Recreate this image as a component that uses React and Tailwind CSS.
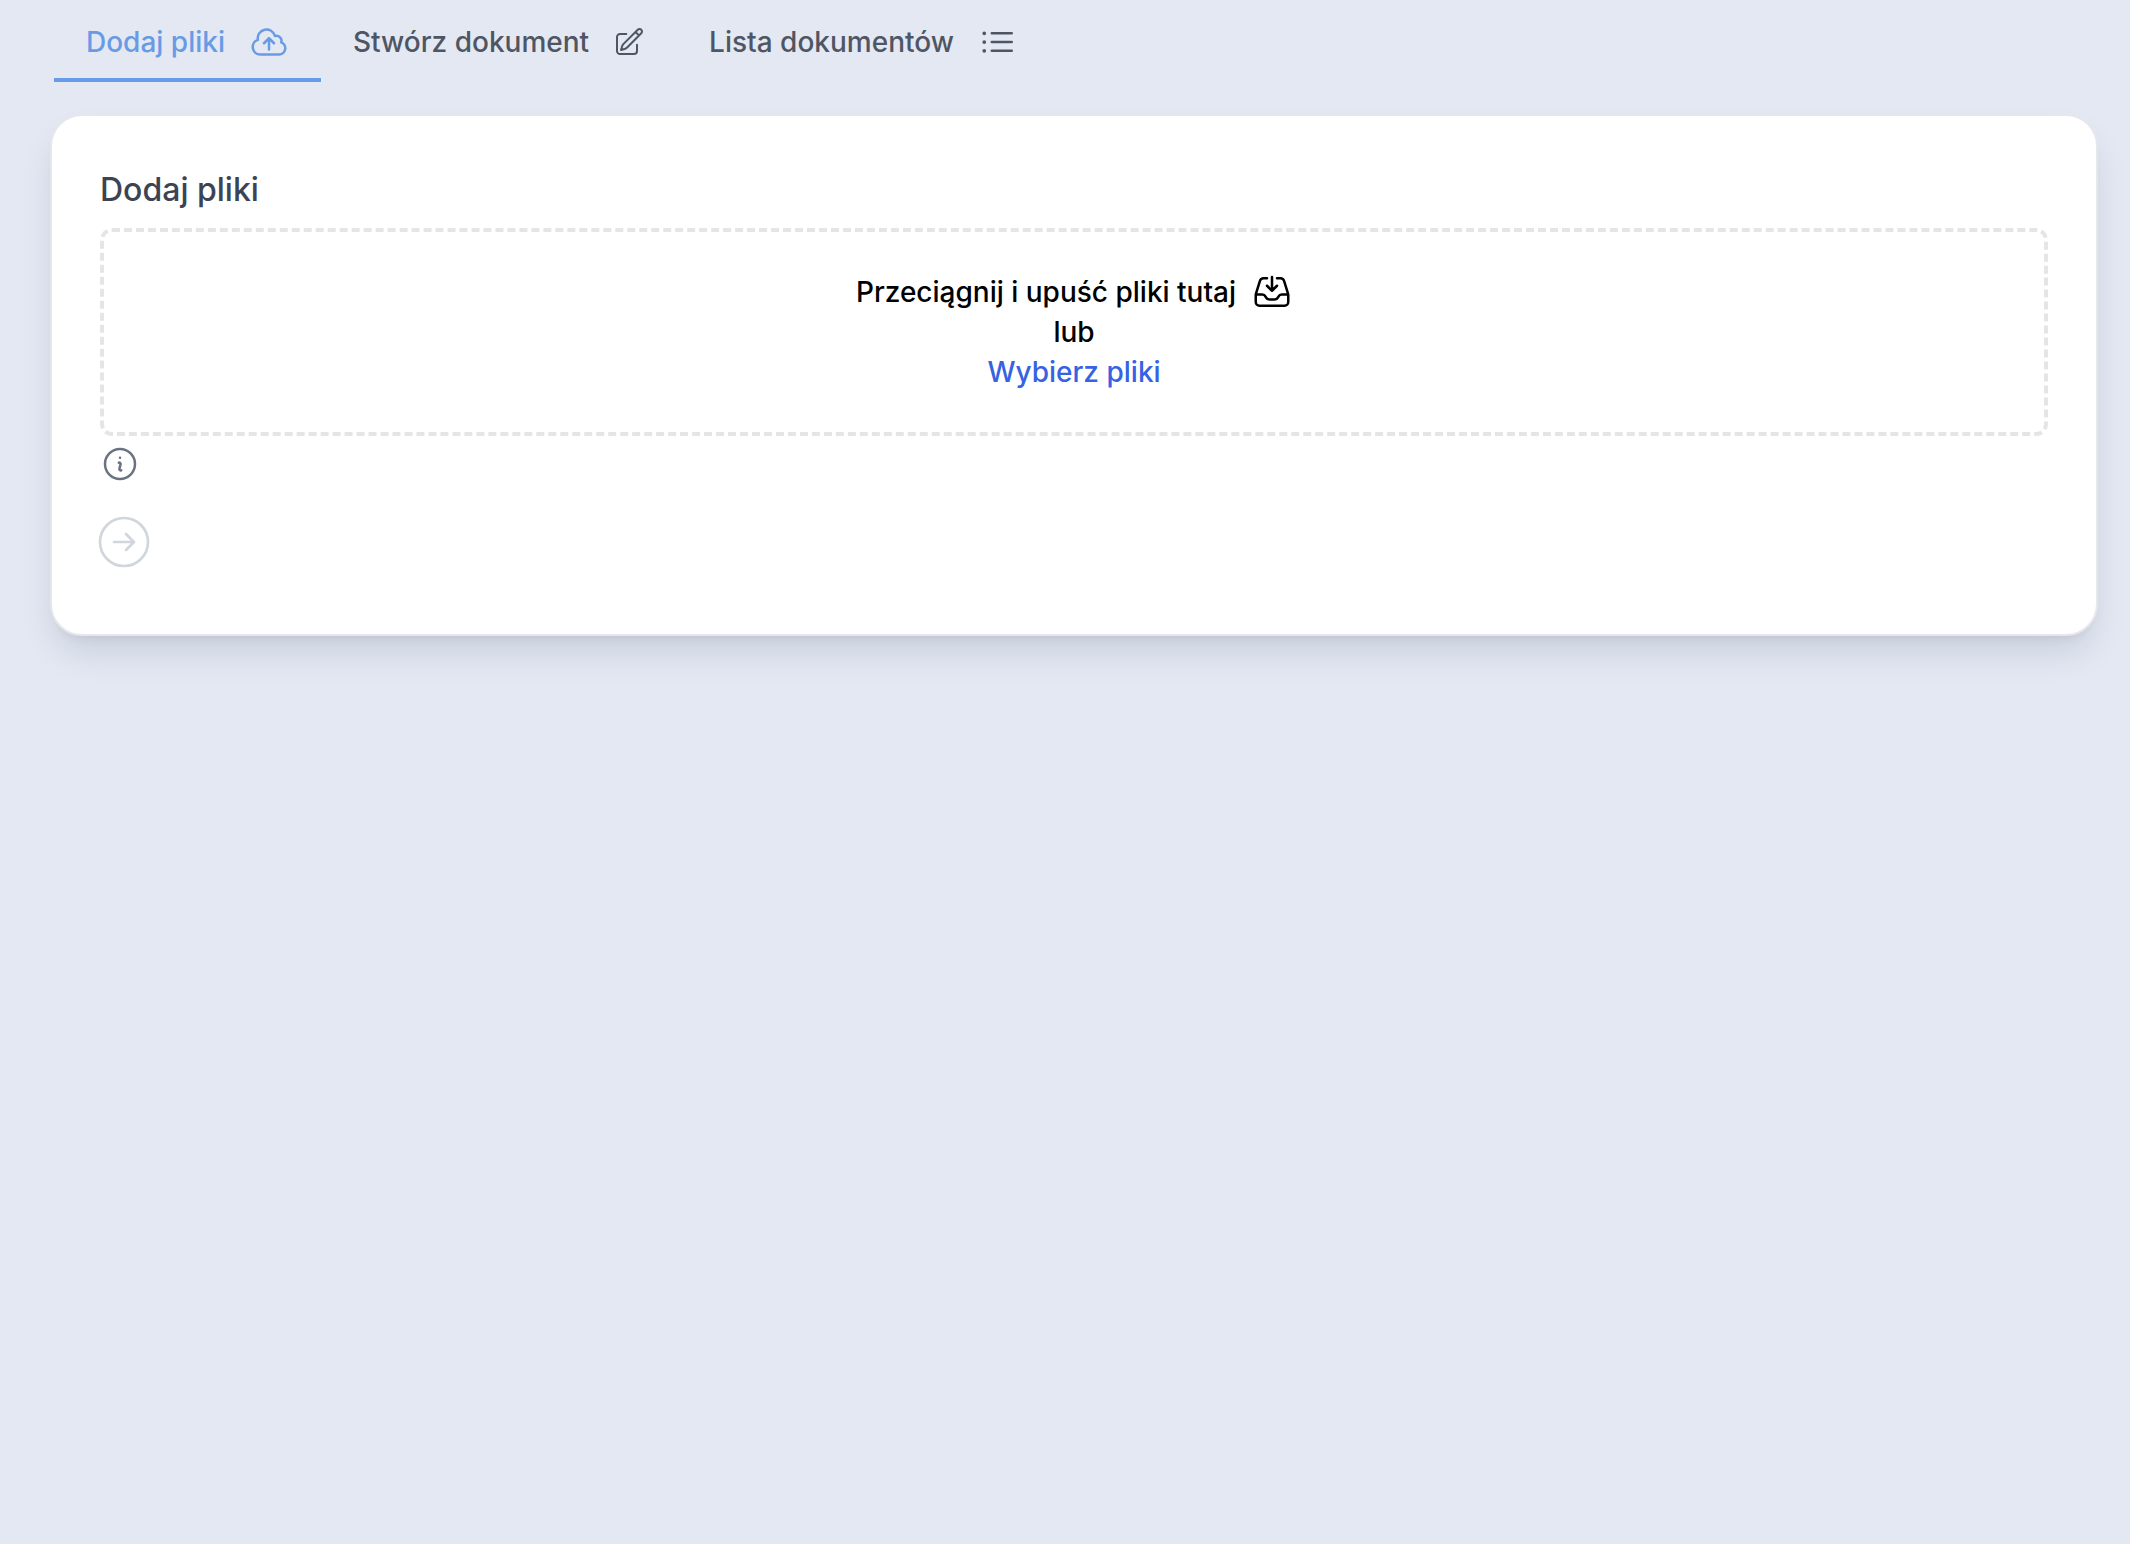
import { useState } from 'react';
import {
  HiOutlineArrowRightCircle,
  HiOutlineCloudArrowUp,
  HiOutlineInboxArrowDown,
  HiOutlineInformationCircle,
  HiOutlineListBullet,
  HiOutlinePencilSquare,
} from 'react-icons/hi2';

const tabs = [
  { id: 'upload', label: 'Dodaj pliki', icon: <HiOutlineCloudArrowUp className="size-10" /> },
  { id: 'create', label: 'Stwórz dokument', icon: <HiOutlinePencilSquare className="size-8" /> },
  { id: 'list', label: 'Lista dokumentów', icon: <HiOutlineListBullet className="size-10" /> },
];

function Tabs({ active, onChange }) {
  return (
    <nav className="flex px-1">
      {tabs.map((tab) => (
        <button
          key={tab.id}
          type="button"
          onClick={() => onChange(tab.id)}
          className={`flex items-center gap-6 border-b-4 px-8 pt-[22px] pb-4 text-[28px] leading-10 font-medium ${
            active === tab.id
              ? 'border-[#689be4] text-[#689be4]'
              : 'border-transparent text-[#4f5663]'
          }`}
        >
          {tab.label}
          {tab.icon}
        </button>
      ))}
    </nav>
  );
}

function DropZone() {
  return (
    <div className="flex flex-col items-center rounded-xl border-4 border-dashed border-[#e5e5e6] py-10 text-[28px] leading-10 font-medium text-black">
      <div className="flex items-center gap-4">
        <span>Przeciągnij i upuść pliki tutaj</span>
        <HiOutlineInboxArrowDown className="size-10" />
      </div>
      <span>lub</span>
      <label htmlFor="files" className="cursor-pointer text-[#3662e3]">
        Wybierz pliki
      </label>
      <input id="files" type="file" multiple className="hidden" />
    </div>
  );
}

export default function App() {
  const [active, setActive] = useState('upload');

  return (
    <div className="min-h-screen bg-[#e3e8f3] pr-8 pl-[50px] font-['Inter',sans-serif]">
      <Tabs active={active} onChange={setActive} />

      <main className="mt-8 rounded-[32px] border-2 border-gray-200 bg-white px-12 pt-12 pb-[60px] shadow-[0_20px_36px_-6px_rgba(15,23,42,0.12),0_8px_12px_-8px_rgba(15,23,42,0.1)]">
        <h1 className="mb-3 text-[32px] leading-[52px] font-medium text-[#3c4454]">Dodaj pliki</h1>
        <DropZone />
        <button type="button" aria-label="Informacje" className="mt-2 block text-gray-500">
          <HiOutlineInformationCircle className="size-10" />
        </button>
        <button type="button" aria-label="Dalej" disabled className="mt-[26px] -ml-2 block text-gray-300">
          <HiOutlineArrowRightCircle className="size-16" strokeWidth={1} />
        </button>
      </main>
    </div>
  );
}
